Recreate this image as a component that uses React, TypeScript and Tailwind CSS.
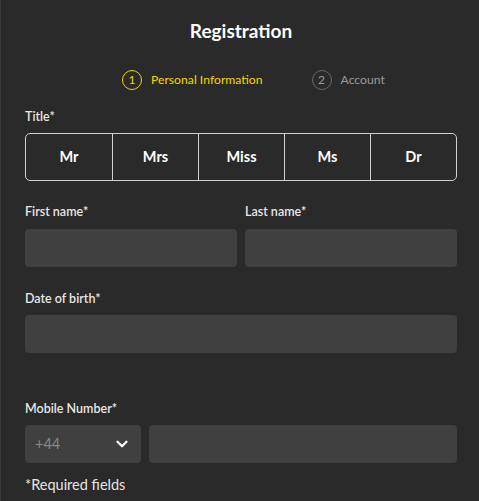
import { ChevronDown } from 'lucide-react';

const TITLES = ['Mr', 'Mrs', 'Miss', 'Ms', 'Dr'];

function Label({ children }: { children: React.ReactNode }) {
  return <div className="text-[12.5px] leading-4 font-semibold text-[#e6e6e6]">{children}</div>;
}

function Input({ className = '' }: { className?: string }) {
  return <div className={`h-[38px] rounded-[4px] bg-[#404040] ${className}`} />;
}

export default function App() {
  return (
    <div
      className="min-h-[501px] w-full bg-[#2a2a2a] border-l border-[#3a3a3a] text-white pl-6 pr-[22px] pt-5"
      style={{ fontFamily: 'Lato, "Noto Sans", sans-serif' }}
    >
      {/* Header */}
      <h1 className="text-center text-[19px] leading-[22px] font-bold">Registration</h1>

      {/* Steps */}
      <div className="mt-[28px] flex items-center gap-[49px] pl-[97px] text-[12.2px]">
        <div className="flex items-center gap-[9px] text-[#f2d600]">
          <span className="w-5 h-5 rounded-full border border-[#f2d600] flex items-center justify-center text-[12px]">1</span>
          <span>Personal Information</span>
        </div>
        <div className="flex items-center gap-[9px] text-[#9a9a9a]">
          <span className="w-5 h-5 rounded-full border border-[#6a6a6a] flex items-center justify-center text-[12px]">2</span>
          <span>Account</span>
        </div>
      </div>

      {/* Title */}
      <div className="mt-[19px]">
        <Label>Title*</Label>
        <div className="mt-2 grid grid-cols-5 h-[48px] rounded-[5px] border border-[#d0d0d0] overflow-hidden">
          {TITLES.map((t, i) => (
            <button
              key={t}
              className={`text-[14.5px] font-bold text-white ${i > 0 ? 'border-l border-[#d0d0d0]' : ''}`}
            >
              {t}
            </button>
          ))}
        </div>
      </div>

      {/* Names */}
      <div className="mt-[23px] grid grid-cols-2 gap-2">
        <div>
          <Label>First name*</Label>
          <Input className="mt-[9px]" />
        </div>
        <div>
          <Label>Last name*</Label>
          <Input className="mt-[9px]" />
        </div>
      </div>

      {/* Date of birth */}
      <div className="mt-[24px]">
        <Label>Date of birth*</Label>
        <Input className="mt-2" />
      </div>

      {/* Mobile */}
      <div className="mt-[48px]">
        <Label>Mobile Number*</Label>
        <div className="mt-2 flex gap-2">
          <div className="w-[116px] h-[38px] rounded-[4px] bg-[#404040] flex items-center justify-between pl-[10px] pr-[10px]">
            <span className="text-[14.5px] text-[#8a8a8a]">+44</span>
            <ChevronDown size={18} strokeWidth={3} className="text-white" />
          </div>
          <Input className="flex-1" />
        </div>
      </div>

      <p className="mt-3 text-[14.5px] leading-5 text-[#e6e6e6]">*Required fields</p>
    </div>
  );
}
